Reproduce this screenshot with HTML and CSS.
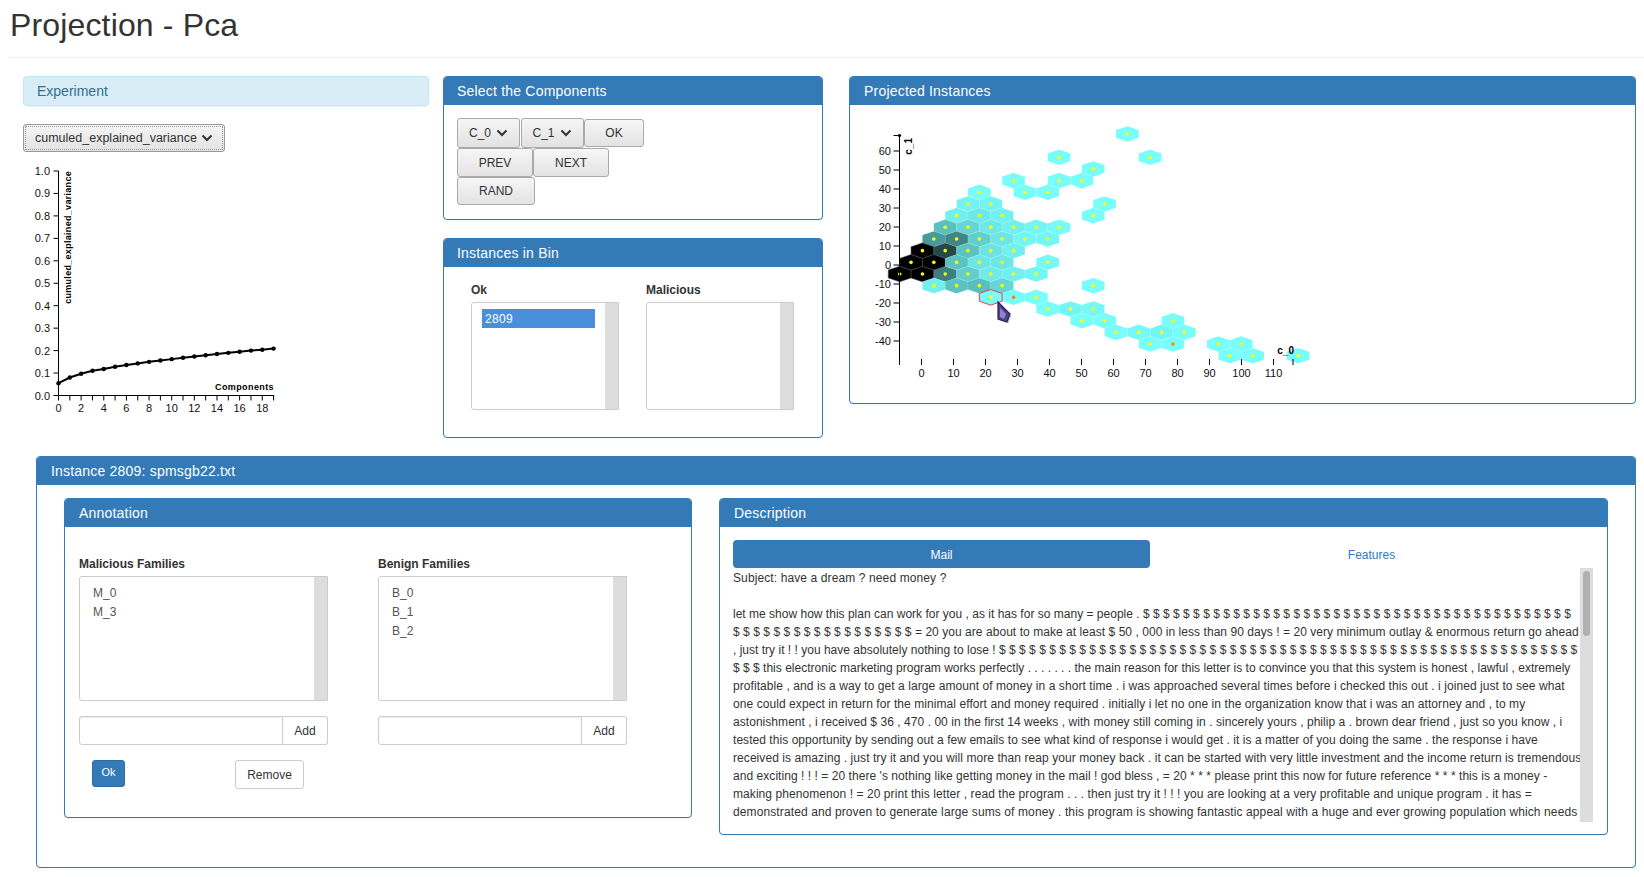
FILE: index.html
```html
<!DOCTYPE html>
<html lang="en">
<head>
    <meta charset="UTF-8">
    <title>Projection - Pca</title>
    <link rel="stylesheet" href="styles.css">
</head>
<body>
    <h1 class="page-title">Projection - Pca</h1>

    <!-- Top row -->
    <div class="top-row">
        <div class="col-experiment">
            <div class="panel-info">Experiment</div>
            <button class="select-btn focused">cumuled_explained_variance
                <svg class="chevron" viewBox="0 0 12 8"><path d="M1.5 1.5 L6 6 L10.5 1.5"/></svg>
            </button>
            <svg id="varianceChart" class="variance-chart" width="280" height="260"></svg>
        </div>

        <div class="col-controls">
            <div class="panel">
                <div class="panel-heading">Select the Components</div>
                <div class="components-body">
                    <div class="btn-row tall">
                        <button class="select-btn comp">C_0
                            <svg class="chevron" viewBox="0 0 12 8"><path d="M1.5 1.5 L6 6 L10.5 1.5"/></svg>
                        </button>
                        <button class="select-btn comp">C_1
                            <svg class="chevron" viewBox="0 0 12 8"><path d="M1.5 1.5 L6 6 L10.5 1.5"/></svg>
                        </button>
                        <button class="grey-btn ok">OK</button>
                    </div>
                    <div class="btn-row">
                        <button class="grey-btn prev">PREV</button>
                        <button class="grey-btn next">NEXT</button>
                    </div>
                    <div class="btn-row">
                        <button class="grey-btn rand">RAND</button>
                    </div>
                </div>
            </div>

            <div class="panel">
                <div class="panel-heading">Instances in Bin</div>
                <div class="bin-body">
                    <div class="bin-col">
                        <label class="field-label">Ok</label>
                        <div class="listbox bin-list">
                            <div class="list-items"><div class="bin-item selected">2809</div></div>
                            <div class="track"></div>
                        </div>
                    </div>
                    <div class="bin-col">
                        <label class="field-label">Malicious</label>
                        <div class="listbox bin-list">
                            <div class="list-items"></div>
                            <div class="track"></div>
                        </div>
                    </div>
                </div>
            </div>
        </div>

        <div class="panel col-projection">
            <div class="panel-heading">Projected Instances</div>
            <svg id="hexChart" class="hex-chart" width="500" height="290"></svg>
        </div>
    </div>

    <!-- Instance -->
    <div class="panel instance">
        <div class="panel-heading">Instance 2809: spmsgb22.txt</div>
        <div class="instance-body">
            <div class="panel annotation">
                <div class="panel-heading">Annotation</div>
                <div class="annotation-body">
                    <div class="families">
                        <div class="family-col">
                            <label class="field-label">Malicious Families</label>
                            <div class="listbox family-list">
                                <div class="list-items family-items">
                                    <div>M_0</div>
                                    <div>M_3</div>
                                </div>
                                <div class="track"></div>
                            </div>
                            <div class="add-row">
                                <input class="add-input" type="text">
                                <button class="add-btn">Add</button>
                            </div>
                        </div>
                        <div class="family-col">
                            <label class="field-label">Benign Families</label>
                            <div class="listbox family-list">
                                <div class="list-items family-items">
                                    <div>B_0</div>
                                    <div>B_1</div>
                                    <div>B_2</div>
                                </div>
                                <div class="track"></div>
                            </div>
                            <div class="add-row">
                                <input class="add-input" type="text">
                                <button class="add-btn">Add</button>
                            </div>
                        </div>
                    </div>
                    <div class="annotation-actions">
                        <button class="ok-btn">Ok</button>
                        <button class="remove-btn">Remove</button>
                    </div>
                </div>
            </div>

            <div class="panel description">
                <div class="panel-heading">Description</div>
                <div class="description-body">
                    <div class="tabs">
                        <a class="tab active">Mail</a>
                        <a class="tab">Features</a>
                    </div>
                    <div class="mail">
                        <div class="mail-text">
                            <div class="line-wide">Subject: have a dream ? need money ?</div>
                            <div class="line-gap"></div>
                            <div class="line-tight">let me show how this plan can work for you , as it has for so many = people . $ $ $ $ $ $ $ $ $ $ $ $ $ $ $ $ $ $ $ $ $ $ $ $ $ $ $ $ $ $ $ $ $ $ $ $ $ $ $ $ $ $ $</div>
                            <div class="line-mid">$ $ $ $ $ $ $ $ $ $ $ $ $ $ $ $ $ $ = 20 you are about to make at least $ 50 , 000 in less than 90 days ! = 20 very minimum outlay &amp; enormous return go ahead</div>
                            <div class="line-tight">, just try it ! ! you have absolutely nothing to lose ! $ $ $ $ $ $ $ $ $ $ $ $ $ $ $ $ $ $ $ $ $ $ $ $ $ $ $ $ $ $ $ $ $ $ $ $ $ $ $ $ $ $ $ $ $ $ $ $ $ $ $ $ $ $ $ $ $ $</div>
                            <div class="line-tight">$ $ $ this electronic marketing program works perfectly . . . . . . . the main reason for this letter is to convince you that this system is honest , lawful , extremely</div>
                            <div class="line-loose">profitable , and is a way to get a large amount of money in a short time . i was approached several times before i checked this out . i joined just to see what</div>
                            <div class="line-loose">one could expect in return for the minimal effort and money required . initially i let no one in the organization know that i was an attorney and , to my</div>
                            <div class="line-mid">astonishment , i received $ 36 , 470 . 00 in the first 14 weeks , with money still coming in . sincerely yours , philip a . brown dear friend , just so you know , i</div>
                            <div class="line-mid">tested this opportunity by sending out a few emails to see what kind of response i would get . it is a matter of you doing the same . the response i have</div>
                            <div class="line-loose">received is amazing . just try it and you will more than reap your money back . it can be started with very little investment and the income return is tremendous</div>
                            <div class="line-mid">and exciting ! ! ! = 20 there 's nothing like getting money in the mail ! god bless , = 20 * * * please print this now for future reference * * * this is a money -</div>
                            <div class="line-loose">making phenomenon ! = 20 print this letter , read the program . . . then just try it ! ! ! you are looking at a very profitable and unique program . it has =</div>
                            <div class="line-wide">demonstrated and proven to generate large sums of money . this program is showing fantastic appeal with a huge and ever growing population which needs</div>
                        </div>
                        <div class="mail-scroll"><div class="mail-thumb"></div></div>
                    </div>
                </div>
            </div>
        </div>
    </div>

    <script src="charts.js"></script>
</body>
</html>
```

FILE: styles.css
```css
body, html {
    margin: 0;
    padding: 0;
    font-family: "Liberation Sans", Arial, sans-serif;
    font-size: 12px;
    color: #333;
    background-color: #fff;
}

button {
    font-family: inherit;
    cursor: pointer;
}

.page-title {
    margin: 0 0 18px 9px;
    height: 57px;
    box-sizing: content-box;
    padding-left: 1px;
    font-size: 32px;
    font-weight: normal;
    letter-spacing: 0.15px;
    line-height: 50px;
    border-bottom: 1px solid #eee;
}

/* Top row */
.top-row {
    display: flex;
    align-items: flex-start;
    margin-left: 23px;
}

.col-experiment {
    width: 406px;
    margin-right: 14px;
}

.col-controls {
    width: 380px;
    margin-right: 26px;
    display: flex;
    flex-direction: column;
    gap: 18px;
}

.col-projection {
    width: 787px;
    height: 328px;
}

/* Panels */
.panel {
    box-sizing: border-box;
    border: 1px solid #337ab7;
    border-radius: 4px;
    background-color: #fff;
    box-shadow: 0 1px 1px rgba(0,0,0,0.05);
}

.panel-heading {
    height: 28px;
    padding: 0 14px;
    line-height: 28px;
    font-size: 14px;
    letter-spacing: 0.2px;
    color: #fff;
    background-color: #337ab7;
    border-radius: 3px 3px 0 0;
}

.col-controls .panel-heading {
    padding: 0 13px;
}

.panel-info {
    box-sizing: border-box;
    height: 30px;
    padding: 0 13px;
    line-height: 28px;
    font-size: 14px;
    color: #31708f;
    background-color: #d9edf7;
    border: 1px solid #bce8f1;
    border-radius: 4px;
    box-shadow: 0 1px 1px rgba(0,0,0,0.05);
}

/* Select look buttons */
.select-btn {
    box-sizing: border-box;
    display: flex;
    align-items: center;
    justify-content: space-between;
    height: 28px;
    padding: 0 11px;
    font-size: 12.5px;
    color: #333;
    background: linear-gradient(#f5f5f5, #e2e2e2);
    border: 1px solid #9a9a9a;
    border-radius: 3px;
}

.select-btn.focused {
    width: 202px;
    margin-top: 18px;
    outline: 1px dotted #999;
    outline-offset: -3px;
}

.chevron {
    flex: none;
    width: 12px;
    height: 8px;
    fill: none;
    stroke: #333;
    stroke-width: 2;
}

.variance-chart {
    display: block;
    margin: 8px 0 0 -23px;
}

/* Components */
.components-body {
    box-sizing: border-box;
    height: 114px;
    padding: 13px 13px 0;
}

.btn-row {
    display: flex;
    height: 29px;
}

.btn-row.tall {
    height: 30px;
    align-items: center;
}

.select-btn.comp {
    width: 63px;
    height: 30px;
    margin-right: 0.5px;
    font-size: 12px;
    border-color: #aaa;
}

.grey-btn {
    box-sizing: border-box;
    height: 100%;
    padding: 0;
    font-size: 12px;
    color: #333;
    background: linear-gradient(#f6f6f6, #e3e3e3);
    border: 1px solid #aaa;
    border-radius: 3px;
}

.grey-btn.ok {
    width: 60px;
    height: 28px;
}

.grey-btn.prev {
    width: 76px;
}

.grey-btn.next {
    width: 76px;
}

.grey-btn.rand {
    width: 78px;
    height: 28px;
}

/* Instances in bin */
.bin-body {
    display: flex;
    gap: 27px;
    height: 170px;
    padding: 13px 0 0 27px;
    box-sizing: border-box;
}

.bin-col {
    width: 148px;
}

.field-label {
    display: block;
    height: 20px;
    line-height: 20px;
    font-weight: bold;
    font-size: 12px;
    color: #333;
}

.listbox {
    box-sizing: border-box;
    display: flex;
    border: 1px solid #ccc;
    border-radius: 3px 0 0 3px;
    background-color: #fff;
}

.list-items {
    flex: 1;
}

.track {
    width: 13px;
    background-color: #ddd;
}

.bin-list {
    height: 108px;
    margin-top: 2px;
}

.bin-item {
    height: 19px;
    margin: 6px 10px 0 10px;
    padding-left: 3px;
    line-height: 20px;
    letter-spacing: 0.3px;
}

.bin-item.selected {
    color: #fff;
    background-color: #4a8fdb;
}

/* Projection */
.hex-chart {
    display: block;
    margin-top: 5px;
}

/* Instance */
.instance {
    width: 1600px;
    height: 412px;
    margin: 18px 0 0 36px;
}

.instance-body {
    display: flex;
    align-items: flex-start;
    gap: 27px;
    padding: 13px 0 0 27px;
}

.annotation {
    width: 628px;
    height: 320px;
}

.annotation-body {
    padding: 27px 0 0 14px;
}

.families {
    display: flex;
    gap: 50px;
}

.family-col {
    width: 249px;
}

.family-list {
    height: 125px;
    margin-top: 2px;
}

.family-items {
    padding: 7px 0 0 13px;
    line-height: 19px;
    color: #555;
}

.add-row {
    display: flex;
    height: 29px;
    margin-top: 15px;
}

.add-input {
    box-sizing: border-box;
    flex: 1;
    min-width: 0;
    height: 29px;
    padding: 0 8px;
    border: 1px solid #ccc;
    border-radius: 3px 0 0 3px;
    box-shadow: inset 0 1px 1px rgba(0,0,0,0.075);
}

.add-btn {
    box-sizing: border-box;
    width: 45px;
    height: 29px;
    padding: 0;
    font-size: 12px;
    color: #333;
    background-color: #fff;
    border: 1px solid #ccc;
    border-left: none;
    border-radius: 0 3px 3px 0;
}

.annotation-actions {
    display: flex;
    align-items: flex-start;
    margin-top: 15px;
    padding-left: 13px;
}

.ok-btn {
    box-sizing: border-box;
    width: 33px;
    height: 27px;
    padding: 0 0 3px;
    font-size: 11px;
    color: #fff;
    background-color: #337ab7;
    border: 1px solid #2e6da4;
    border-radius: 3px;
}

.remove-btn {
    box-sizing: border-box;
    width: 69px;
    height: 29px;
    margin-left: 110px;
    padding: 0;
    font-size: 12px;
    color: #333;
    background-color: #fff;
    border: 1px solid #ccc;
    border-radius: 3px;
}

/* Description */
.description {
    width: 889px;
    height: 337px;
}

.description-body {
    padding: 13px 0 0 13px;
}

.tabs {
    display: flex;
    width: 860px;
}

.tab {
    flex: 0 0 417px;
    height: 28px;
    line-height: 30px;
    text-align: center;
    font-size: 12px;
    color: #337ab7;
    border-radius: 4px;
}

.tab.active {
    color: #fff;
    background-color: #337ab7;
}

.tab + .tab {
    flex: 1;
}

.mail {
    display: flex;
    width: 860px;
    height: 254px;
    overflow: hidden;
}

.mail-text {
    flex: 1;
    min-width: 0;
    padding-top: 1px;
    line-height: 18px;
    white-space: nowrap;
    color: #333;
}

.line-gap {
    height: 18px;
}

/* The lines are set one by one, each keeps the width it has in the mail view */
.line-tight {
    letter-spacing: 0.01px;
}

.line-mid {
    letter-spacing: 0.05px;
}

.line-loose {
    letter-spacing: 0.07px;
}

.line-wide {
    letter-spacing: 0.11px;
}

.mail-scroll {
    flex: 0 0 13px;
    background-color: #ddd;
}

.mail-thumb {
    width: 7px;
    height: 65px;
    margin: 3px 0 0 3px;
    background-color: #b0b0b0;
    border-radius: 4px;
}
```

FILE: charts.js
```js
// Draws the explained variance curve and the hexbin projection
const SVG_NS = 'http://www.w3.org/2000/svg';

function add(parent, tag, attrs, text) {
    const node = document.createElementNS(SVG_NS, tag);
    Object.keys(attrs).forEach(k => node.setAttribute(k, attrs[k]));
    if (text !== undefined) node.textContent = text;
    parent.appendChild(node);
    return node;
}

function line(parent, x1, y1, x2, y2, width) {
    add(parent, 'line', { x1, y1, x2, y2, stroke: '#000', 'stroke-width': width || 1 });
}

function label(parent, x, y, anchor, text) {
    add(parent, 'text', { x, y, 'text-anchor': anchor, 'font-size': 11, fill: '#111' }, text);
}

// Variance chart, origin of the svg sits at page (0, 160)
function drawVariance() {
    const svg = document.getElementById('varianceChart');
    const left = 58.5, bottom = 235.5, top = 11, stepX = 11.32;
    const values = [0.055, 0.08, 0.097, 0.11, 0.118, 0.128, 0.136, 0.143, 0.15, 0.156,
        0.162, 0.168, 0.174, 0.179, 0.185, 0.19, 0.195, 0.2, 0.204, 0.209];

    line(svg, left, top, left, bottom);
    line(svg, left - 0.5, bottom, left + stepX * 19 + 0.5, bottom);

    for (let t = 0; t <= 10; t++) {
        const y = bottom - t * 22.45;
        line(svg, left - 5, y, left, y);
        label(svg, 50, y + 4, 'end', (t / 10).toFixed(1));
    }
    for (let i = 0; i < 20; i++) {
        const x = left + i * stepX;
        line(svg, x, bottom, x, bottom + 5);
        if (i % 2 === 0) label(svg, x, bottom + 16, 'middle', i);
    }

    const points = values.map((v, i) => [left + i * stepX, bottom - v * 224.5]);
    add(svg, 'polyline', {
        points: points.map(p => p.join(',')).join(' '),
        fill: 'none', stroke: '#000', 'stroke-width': 2
    });
    points.forEach(p => add(svg, 'circle', { cx: p[0], cy: p[1], r: 2.2, fill: '#000' }));

    add(svg, 'text', {
        x: 0, y: 0, 'font-size': 9, 'font-weight': 'bold', 'text-anchor': 'end',
        'letter-spacing': 0.3,
        transform: 'translate(71 11) rotate(-90)'
    }, 'cumuled_explained_variance');
    add(svg, 'text', {
        x: 274, y: 230, 'font-size': 9, 'font-weight': 'bold', 'text-anchor': 'end',
        'letter-spacing': 0.4
    }, 'Components');
}

// Bins as [column, darkness], keyed by row. Columns and rows are half steps of the grid.
const BINS = {
    '-12': [[20, 0]],
    '-10': [[14, 0], [22, 0]],
    '-9': [[17, 0]],
    '-8': [[10, 0], [14, 0], [16, 0]],
    '-7': [[7, 0], [11, 0], [13, 0]],
    '-6': [[6, 0.04], [8, 0.04], [18, 0]],
    '-5': [[5, 0.05], [7, 0.08], [9, 0.05], [17, 0]],
    '-4': [[4, 0.24], [6, 0.16], [8, 0.08], [10, 0.05], [12, 0.03], [14, 0.01]],
    '-3': [[3, 0.39], [5, 0.47], [7, 0.18], [9, 0.09], [11, 0.03], [13, 0.03]],
    '-2': [[2, 1], [4, 0.71], [6, 0.23], [8, 0.1], [10, 0.05]],
    '-1': [[1, 1], [3, 1], [5, 0.23], [7, 0.09], [9, 0.09], [13, 0.02]],
    '0': [[0, 1], [2, 1], [4, 0.5], [6, 0.18], [8, 0.07], [10, 0.05], [12, 0.03]],
    '1': [[3, 0.05], [5, 0.23], [7, 0.25], [9, 0.16], [17, 0]],
    '2': [[10, 0.01], [12, 0]],
    '3': [[13, 0], [15, 0.03], [17, 0.02]],
    '4': [[16, 0], [18, 0], [24, 0]],
    '5': [[19, 0], [21, 0.02], [23, 0.03], [25, 0]],
    '6': [[22, 0], [24, 0], [28, 0], [30, 0]],
    '7': [[29, 0], [31, 0], [35, 0]]
};
const ORANGE_DOTS = ['10,2', '24,6'];

// Projection chart, origin of the svg sits at page (850, 110)
function drawProjection() {
    const svg = document.getElementById('hexChart');
    const startX = 49.67, startY = 164, halfW = 11.385, rowH = 11.67;
    const w = 22.77, h = 15.56;
    const hexPoints = `0,${-h / 2} ${w / 2},${-h / 4} ${w / 2},${h / 4} 0,${h / 2} ${-w / 2},${h / 4} ${-w / 2},${-h / 4}`;
    const dots = [];

    function hex(i, j, fill, stroke, width) {
        add(svg, 'polygon', {
            points: hexPoints, fill, stroke,
            'stroke-width': width,
            transform: `translate(${startX + i * halfW} ${startY + j * rowH})`
        });
    }

    Object.keys(BINS).forEach(row => {
        const j = Number(row);
        BINS[row].forEach(([i, dark]) => {
            const k = 1 - dark;
            const fill = `rgb(${Math.round(120 * k)},${Math.round(253 * k)},${Math.round(253 * k)})`;
            hex(i, j, fill, dark === 1 ? '#444' : 'rgba(255,255,255,0.15)', 0.6);
            dots.push([i, j]);
        });
    });
    hex(8, 2, '#78fdfd', '#e8404a', 1);
    dots.push([8, 2]);

    dots.forEach(([i, j]) => {
        const orange = ORANGE_DOTS.includes(i + ',' + j);
        add(svg, 'circle', {
            cx: startX + i * halfW, cy: startY + j * rowH, r: 1.8,
            fill: orange ? '#f58a10' : '#ffff00'
        });
    });

    // Axes, the x axis has ticks only
    const axisX = 49.5, axisTop = 25.5, axisBottom = 255;
    line(svg, axisX, axisTop, axisX, axisBottom);
    line(svg, axisX - 6, axisTop, axisX, axisTop);
    add(svg, 'circle', { cx: axisX, cy: axisTop, r: 1.6, fill: '#000' });
    for (let v = -40; v <= 60; v += 10) {
        const y = 155 - v * 1.9;
        line(svg, axisX - 6, y, axisX, y);
        label(svg, 41, y + 4, 'end', v);
    }
    line(svg, axisX, axisBottom - 6, axisX, axisBottom);
    for (let v = 0; v <= 110; v += 10) {
        const x = 71.5 + v * 3.2;
        line(svg, x, axisBottom - 6, x, axisBottom);
        label(svg, x, axisBottom + 12, 'middle', v);
    }
    line(svg, 443, axisBottom - 6, 443, axisBottom);

    add(svg, 'text', {
        x: 0, y: 0, 'font-size': 10, 'font-weight': 'bold', 'text-anchor': 'end',
        transform: 'translate(62 28) rotate(-90)'
    }, 'c_1');
    add(svg, 'text', { x: 444, y: 244, 'font-size': 10, 'font-weight': 'bold', 'text-anchor': 'end' }, 'c_0');

    // Mouse pointer caught in the capture
    add(svg, 'polygon', { points: '148,192 160,204 157,212 148,209', fill: 'rgba(0,0,0,0.18)', transform: 'translate(1.5 1.5)' });
    add(svg, 'polygon', { points: '148,192 160,204 157,212 148,209', fill: '#4f3f8f', stroke: '#2b1f63', 'stroke-width': 1.2 });
    add(svg, 'polygon', { points: '150,198 156,204 154,209 150,207', fill: '#8f85c4' });
}

drawVariance();
drawProjection();
```
